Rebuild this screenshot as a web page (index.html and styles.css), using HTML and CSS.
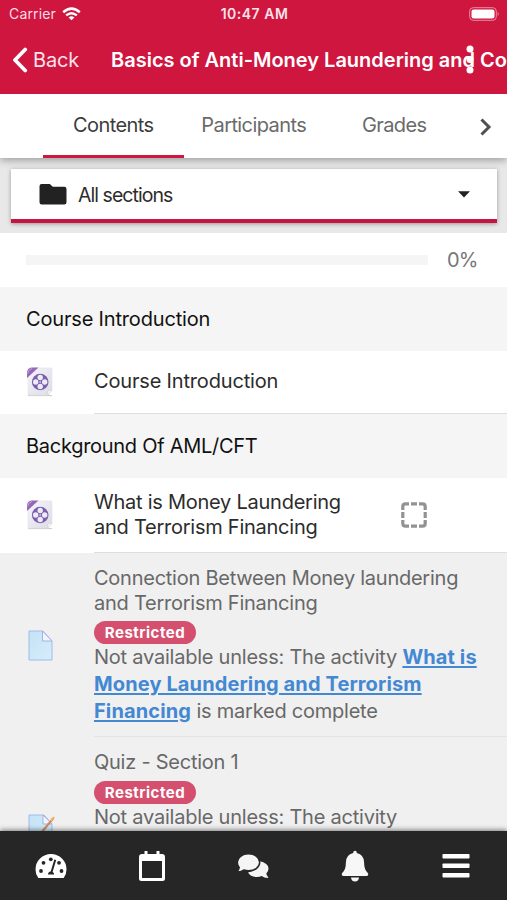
FILE: index.html
```html
<!DOCTYPE html>
<html lang="en">
<head>
<meta charset="utf-8">
<meta name="viewport" content="width=device-width, initial-scale=1">
<title>Basics of Anti-Money Laundering</title>
<link rel="stylesheet" href="styles.css">
</head>
<body>
<svg class="defs" width="0" height="0" aria-hidden="true">
  <defs>
    <linearGradient id="paper" x1="0" y1="0" x2="1" y2="1"><stop offset="0" stop-color="#f6f5fb"/><stop offset="1" stop-color="#dcdce6"/></linearGradient>
    <linearGradient id="blue" x1="0" y1="0" x2="1" y2="1"><stop offset="0" stop-color="#c3e3f6"/><stop offset="1" stop-color="#d6edfb"/></linearGradient>
    <symbol id="film" viewBox="0 0 28 30">
      <path d="M2 28.6h24" stroke="#c9c9cd" stroke-width="1"/>
      <path d="M2 1h24v22l-4 5H2z" fill="url(#paper)" stroke="#e2e2ea" stroke-width=".6"/>
      <path d="M26 23l-4 5v-4z" fill="#fff" stroke="#c9c9d3" stroke-width=".5"/>
      <path d="M1 11V6q0-5 5-5.500h6.500z" fill="#9568b8"/>
      <path d="M1.500 6.500q1-4 4.500-5" stroke="#c3a5dc" stroke-width="1" fill="none"/>
      <circle cx="14.200" cy="15" r="8.300" fill="#7861a8"/>
      <g fill="#efe9fa"><circle cx="14.200" cy="10.500" r="2.700"/><circle cx="14.200" cy="19.500" r="2.700"/><circle cx="9.700" cy="15" r="2.700"/><circle cx="18.700" cy="15" r="2.700"/></g>
      <circle cx="14.200" cy="15" r="1" fill="#c4b5df"/>
    </symbol>
  </defs>
</svg>
<div class="app">
  <header class="top">
    <div class="status">
      <div class="carrier"><span>Carrier</span>
        <svg width="19" height="14" viewBox="0 0 19 14" fill="none" stroke="#fff" stroke-width="2.500"><path d="M1.200 5.200Q9.500-2 17.800 5.200"/><path d="M4.200 8.400Q9.500 4 14.800 8.400"/><path d="M9.500 13.300L6.600 10.400Q9.500 8.200 12.400 10.400z" fill="#fff" stroke="none"/></svg>
      </div>
      <span class="clock">10:47 AM</span>
      <svg class="battery" width="31" height="14" viewBox="0 0 31 14"><rect x=".7" y=".7" width="26.600" height="12.600" rx="3.500" fill="none" stroke="#e98da2"/><rect x="2.500" y="2.500" width="23" height="9" rx="2" fill="#fff"/><path d="M28.700 4.800q2 2.200 0 4.400z" fill="#e98da2"/></svg>
    </div>
    <div class="nav">
      <svg class="chev" width="16" height="26" viewBox="0 0 16 26" fill="none" stroke="#fff" stroke-width="3.800" stroke-linecap="round" stroke-linejoin="round"><path d="M13.200 2.500L3 13l10.200 10.500"/></svg>
      <span class="back">Back</span>
      <h1 class="title">Basics of Anti-Money Laundering and Co</h1>
      <svg class="more" width="8" height="29" viewBox="0 0 8 29" fill="#fff"><circle cx="4" cy="4" r="3.500"/><circle cx="4" cy="14.500" r="3.500"/><circle cx="4" cy="25" r="3.500"/></svg>
    </div>
  </header>
  <nav class="tabs">
    <span class="tab active">Contents</span>
    <span class="tab">Participants</span>
    <span class="tab">Grades</span>
    <svg class="next" width="12" height="18" viewBox="0 0 12 18" fill="none" stroke="#505050" stroke-width="3"><path d="M1.500 1.500L9 9l-7.500 7.500"/></svg>
  </nav>
  <main class="content">
    <div class="selector">
      <div class="select">
        <svg width="28" height="21" viewBox="0 0 28 21"><path d="M2.500 0h8.300l3 2.700h11.500q2.200 0 2.200 2.200v13.400q0 2.200-2.200 2.200H2.700Q.5 20.500.5 18.300V2.200Q.5 0 2.500 0z" fill="#222"/></svg>
        <span>All sections</span>
        <svg class="caret" width="12" height="7" viewBox="0 0 12 7"><path d="M0 .3h12L6 6.500z" fill="#222"/></svg>
      </div>
    </div>
    <div class="progress"><div class="bar"></div><span class="pct">0%</span></div>
    <h2 class="divider">Course Introduction</h2>
    <div class="row single">
      <svg class="icon" width="28" height="30"><use href="#film"/></svg>
      <div class="body"><p class="name">Course Introduction</p></div>
    </div>
    <h2 class="divider wide">Background Of AML/CFT</h2>
    <div class="row double">
      <svg class="icon" width="28" height="30"><use href="#film"/></svg>
      <div class="body"><p class="name">What is Money Laundering<br>and Terrorism Financing</p>
        <svg class="check" width="26" height="26" viewBox="0 0 26 26" fill="none" stroke="#929292" stroke-width="3.200"><path d="M1.800 8V4.500Q1.800 1.800 4.500 1.800H8M18 1.800h3.500q2.700 0 2.700 2.700V8M24.200 18v3.500q0 2.700-2.700 2.700H18M8 24.200H4.500q-2.700 0-2.700-2.700V18M10 1.800h6M10 24.200h6M1.800 10v6M24.200 10v6"/></svg>
      </div>
    </div>
    <div class="row restricted">
      <svg class="icon page" width="26" height="31" viewBox="0 0 26 31"><path d="M1 1h14l9 10v19H1z" fill="url(#blue)" stroke="#a3b9ea"/><path d="M14.500 1v10H24z" fill="#edf5ff" stroke="#a9b0e5"/></svg>
      <div class="body">
        <p class="name">Connection Between Money laundering<br>and Terrorism Financing</p>
        <span class="badge">Restricted</span>
        <p class="info">Not available unless: The activity <a>What is</a><br><a>Money Laundering and Terrorism</a><br><a>Financing</a> is marked complete</p>
      </div>
    </div>
    <div class="row restricted last">
      <svg class="icon quiz" width="27" height="31" viewBox="0 0 27 31"><path d="M1 1h15l8 9v20H1z" fill="url(#blue)" stroke="#a3b9ea"/><path d="M15 1v9h9z" fill="#edf5ff" stroke="#a9b0e5"/><path d="M25.500 4L13 19" stroke="#d18a61" stroke-width="2.200"/><path d="M26 3l-3 4" stroke="#f0b36e" stroke-width="2"/></svg>
      <div class="body">
        <p class="name">Quiz - Section 1</p>
        <span class="badge">Restricted</span>
        <p class="info">Not available unless: The activity</p>
      </div>
    </div>
  </main>
  <footer class="bottom">
    <span><svg width="32" height="26" viewBox="0 0 32 26"><path d="M3.300 25Q.5 21.500.5 16.500a15.500 15.500 0 0 1 31 0q0 5-2.800 8.500z" fill="#fff"/><g fill="#262626"><circle cx="8.500" cy="9.800" r="1.900"/><circle cx="15.800" cy="6.300" r="1.900"/><circle cx="24" cy="9.800" r="1.900"/><circle cx="6" cy="18" r="1.900"/><circle cx="26.500" cy="18" r="1.900"/><path d="M13 21.500q0-2.600 2.700-3L19.300 6.500l1.900.6-3.600 12q1.700.8 1.500 2.400z"/></g></svg></span>
    <span><svg width="28" height="32" viewBox="0 0 28 32"><path d="M4 4h2.500V1h3v3h9V1h3v3H24q3 0 3 3v21.500q0 2.500-2.500 2.500h-21Q1 31 1 28.500V7q0-3 3-3zM4 11v17h20V11z" fill="#fff" fill-rule="evenodd"/></svg></span>
    <span><svg width="32" height="26" viewBox="0 0 32 26" fill="#f5f5f5"><path d="M22.300 8q.6 10-11.300 11.500 2.500 4.500 9 4.500 2.600 0 4.700-1 2.300 2 6.300 2 .5-.4 0-1-1.500-1.700-1.700-3.500Q31.500 18.500 31.500 15.500 31.500 10 22.300 8z"/><path d="M11.500.8c6.400 0 11.200 3.800 11.200 8.500s-4.800 8.500-11.200 8.500q-2.600 0-4.700-.8Q4.500 19 .8 19q-.8-.4-.2-1Q2 16.200 2.200 14.500.3 12 .3 9.300C.3 4.600 5.100.8 11.500.8z" stroke="#262626" stroke-width="1.500"/></svg></span>
    <span><svg width="28" height="32" viewBox="0 0 28 32" fill="#f7f7f7"><path d="M14 .8q1.800 0 1.800 2.200 7.300 1.800 7.300 9.500 0 7 3.500 10.200 1.200 1.400.4 2.500-.4.800-1.500.8h-23Q1.400 26 1 25.200q-.8-1.100.4-2.500Q4.900 19.500 4.900 12.500 4.900 4.800 12.200 3q0-2.200 1.800-2.200zM10 27.500h8q-.4 4-4 4t-4-4z"/></svg></span>
    <span><svg width="28" height="26" viewBox="0 0 28 26" fill="#fff"><rect x=".5" y="1" width="27" height="4.600" rx=".8"/><rect x=".5" y="10.500" width="27" height="4.600" rx=".8"/><rect x=".5" y="20" width="27" height="4.600" rx=".8"/></svg></span>
  </footer>
</div>
</body>
</html>
```
FILE: styles.css
```css
* { box-sizing: border-box; }
body { margin: 0; font-family: Inter, "Liberation Sans", sans-serif; font-size: 20px; color: #2c2c2c; }
h1, h2, p { margin: 0; font-weight: 400; font-size: inherit; }
svg { display: block; flex: none; }
.defs { position: absolute; }
.app { width: 507px; height: 900px; display: flex; flex-direction: column; overflow: hidden; background: #fff; }
.top { flex: none; height: 94px; background: #ce163f; color: #fff; }
.status { height: 28px; padding: 0 7px 1px 9px; display: grid; grid-template-columns: 1fr auto 1fr; align-items: center; font-size: 14px; }
.carrier { display: flex; align-items: center; gap: 6px; color: #fbdde4; letter-spacing: .15px; }
.clock { font-weight: 600; color: #fbe3e9; letter-spacing: .5px; }
.battery { justify-self: end; }
.nav { position: relative; height: 66px; padding: 0 0 3px 12px; display: flex; align-items: center; white-space: nowrap; overflow: hidden; }
.back { width: 78px; margin-left: 5px; color: #fbe3e9; letter-spacing: -.2px; }
.title { font-weight: 600; }
.more { position: absolute; left: 466px; top: 17px; }
.tabs { flex: none; height: 64px; padding-left: 43px; display: flex; background: #fff; position: relative; z-index: 1; box-shadow: 0 2px 8px rgba(0,0,0,.35); clip-path: inset(0 0 -12px 0); color: #6a6a6a; letter-spacing: -.58px; }
.tab { width: 140.500px; display: flex; justify-content: center; align-items: center; border-bottom: 3px solid transparent; }
.tab.active { border-color: #ce163f; color: #3c3c3c; }
.next { margin: 24px 0 0 15px; }
.content { flex: 1; min-height: 0; overflow: hidden; }
.selector { height: 75px; padding: 11px 10px 10px 11px; background: #e8e8e8; }
.select { height: 54px; display: flex; align-items: center; background: #fff; border-bottom: 4px solid #c51643; padding: 1px 27px 0 28px; box-shadow: 0 1px 4px rgba(0,0,0,.35); }
.select span { margin-left: 11px; font-size: 19.500px; letter-spacing: -.95px; }
.caret { margin-left: auto; }
.progress { height: 54px; display: flex; align-items: center; padding-left: 26px; gap: 19px; color: #777; letter-spacing: -.8px; }
.bar { width: 402px; height: 10px; background: #f5f5f5; }
.divider { height: 63.500px; display: flex; align-items: center; padding-left: 26px; background: #f5f5f5; color: #111; letter-spacing: -.17px; }
.divider.wide { letter-spacing: -.28px; }
.row { display: flex; padding-left: 26px; align-items: center; }
.icon { margin-right: 40px; }
.body { align-self: stretch; flex: 1; border-bottom: 1px solid #dedede; white-space: nowrap; }
.name { line-height: 24.500px; letter-spacing: -.25px; }
.single { height: 63.500px; }
.single .name { letter-spacing: -.17px; }
.single .body, .double .body { display: flex; align-items: center; }
.single .body { padding-bottom: 1px; }
.double { height: 75.500px; }
.double .body { justify-content: space-between; padding-right: 80px; }
.restricted { height: 184px; background: #f0f0f0; color: #686868; }
.restricted .body { padding-top: 13px; border-color: #e4e4e4; }
.restricted .name, .last .name { letter-spacing: -.25px; }
.page { margin: 0 40px 0 2px; width: 26px; }
.quiz { margin: 0 39px 0 2px; }
.badge { display: flex; align-items: center; justify-content: center; width: 102px; height: 23px; margin-top: 6px; border-radius: 12px; background: #d5506f; color: #fff; font-size: 15px; font-weight: 700; letter-spacing: .5px; }
.info { line-height: 27px; letter-spacing: -.23px; }
.info a { color: #4388d3; font-weight: 700; letter-spacing: .12px; text-decoration: underline; text-decoration-thickness: 2px; text-underline-offset: 2px; }
.bottom { flex: none; height: 69px; display: grid; grid-template-columns: repeat(5, 1fr); background: #262626; position: relative; z-index: 1; box-shadow: 0 -1px 5px rgba(0,0,0,.5); }
.bottom span { display: flex; justify-content: center; align-items: center; padding-top: 1px; }
```
